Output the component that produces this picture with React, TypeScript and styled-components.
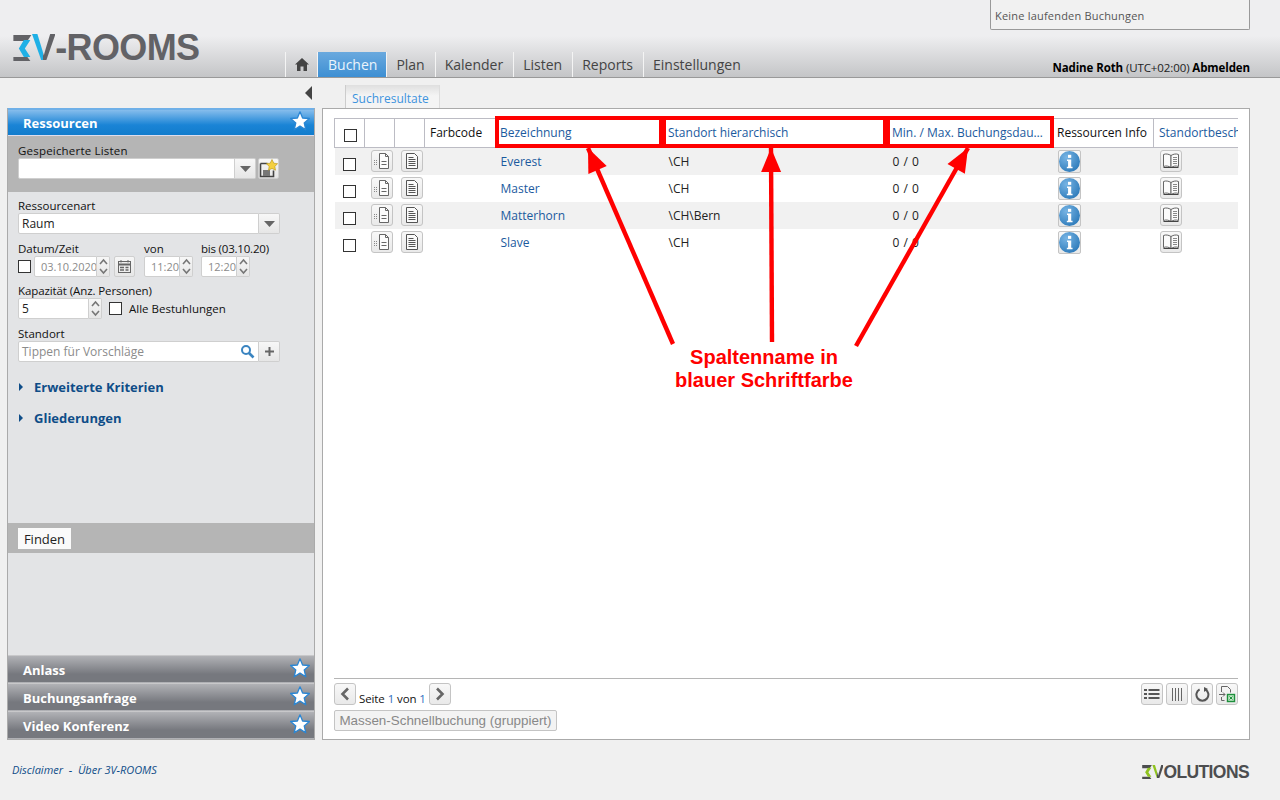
import React from 'react';

import styled, { createGlobalStyle } from 'styled-components';

const GlobalStyle = createGlobalStyle`
  html, body {
    margin: 0;
    padding: 0;
    background: #f0f0f0;
    font-family: "Open Sans", "Noto Sans", sans-serif;
    font-size: 12px;
    color: #111;
  }
`;

const Page = styled.div`
  position: relative;
  width: 1280px;
  height: 800px;
  overflow: hidden;
  display: flex;
  flex-direction: column;
`;

const Header = styled.header`
  height: 77px;
  flex: none;
  display: flex;
  align-items: flex-end;
  padding: 0 30px 0 13px;
  background: linear-gradient(#eeeef0 0, #eeeef0 36px, #c4c5c7 77px);
  border-bottom: 1px solid #999;
`;

const Logo = styled.div`
  width: 272px;
  align-self: flex-start;
  margin-top: 28px;
  display: flex;
  align-items: center;
  font-family: "Liberation Sans", sans-serif;
  font-weight: bold;
  font-size: 36px;
  line-height: 40px;
  letter-spacing: -0.6px;
  color: #626266;
`;

const LogoV = styled.span<{ $accent: string; $base: string }>`
  background: linear-gradient(90deg, ${(p) => p.$accent} 50%, ${(p) => p.$base} 50%);
  -webkit-background-clip: text;
  background-clip: text;
  color: transparent;
`;

const Nav = styled.nav`
  display: flex;
  height: 25px;
  flex: 1;
`;

const NavTab = styled.a<{ $active?: boolean }>`
  display: flex;
  align-items: center;
  padding: 0 ${(p) => (p.$active ? '9px' : '10px')} 0 ${(p) => (p.$active ? '10px' : '9px')};
  font-size: 14px;
  height: 25px;
  color: ${(p) => (p.$active ? '#eaf4fc' : '#444')};
  background: ${(p) => (p.$active ? 'linear-gradient(#6aa9de, #3d8fd3)' : 'transparent')};
  border-left: 1px solid #f4f4f4;
  box-sizing: border-box;
`;

const HomeTab = styled(NavTab)`
  width: 32px;
  justify-content: center;
  padding: 0;
`;

const UserColumn = styled.div`
  width: 260px;
  height: 77px;
  display: flex;
  flex-direction: column;
  justify-content: space-between;
  align-items: stretch;
`;

const BookingBox = styled.div`
  height: 30px;
  box-sizing: border-box;
  padding: 8px 0 0 4px;
  font-size: 11px;
  letter-spacing: 0.2px;
  line-height: 15px;
  color: #555;
  background: #f1f1f1;
  border: 1px solid #999;
  border-top: none;
  border-radius: 0 0 2px 2px;
`;

const UserLine = styled.div`
  text-align: right;
  font-size: 11.5px;
  line-height: 15px;
  padding-bottom: 2px;
  white-space: nowrap;
  color: #222;
  letter-spacing: -0.1px;

  b {
    color: #000;
  }
`;

const Main = styled.main`
  display: grid;
  grid-template-columns: 308px 928px;
  grid-template-rows: 30px 632px;
  column-gap: 7px;
  padding-left: 7px;
`;

const CollapseCell = styled.div`
  display: flex;
  justify-content: flex-end;
  align-items: center;
  padding: 0 3px 0 0;
`;

const TabCell = styled.div`
  display: flex;
  align-items: flex-end;
  padding-left: 23px;
`;

const ContentTab = styled.div`
  height: 24px;
  width: 95px;
  box-sizing: border-box;
  margin-bottom: -1px;
  padding-left: 6px;
  line-height: 27px;
  font-size: 12px;
  color: #3d93dd;
  background: linear-gradient(#dfdfdf, #f4f4f4 45%);
  border-left: 1px solid #ccc;
  border-right: 1px solid #ddd;
`;

const Sidebar = styled.aside`
  display: flex;
  flex-direction: column;
  box-sizing: border-box;
  height: 632px;
  background: #e3e4e6;
  border: 1px solid #aaa;
  border-top-color: #6fb0e8;
`;

const PanelHead = styled.div<{ $blue?: boolean }>`
  height: ${(p) => (p.$blue ? 27 : 28)}px;
  flex: none;
  box-sizing: border-box;
  display: flex;
  align-items: center;
  justify-content: space-between;
  padding: ${(p) => (p.$blue ? 0 : '1px')} 4px 0 15px;
  color: #fff;
  font-size: 13px;
  font-weight: bold;
  background: ${(p) =>
    p.$blue
      ? 'linear-gradient(#86bdec, #1a84d6 60%, #117ccc)'
      : 'linear-gradient(#b1b2b6, #76787e 70%)'};
  border-top: 1px solid ${(p) => (p.$blue ? '#6fb0e8' : '#c8c8ca')};
  border-bottom: 1px solid ${(p) => (p.$blue ? '#dde' : 'transparent')};

  svg {
    margin-bottom: 4px;
  }
`;

const SavedLists = styled.div`
  flex: none;
  height: 56px;
  box-sizing: border-box;
  padding: 7px 10px 0;
  background: #b5b5b5;
`;

const FormArea = styled.div`
  height: 331px;
  flex: none;
  box-sizing: border-box;
  padding: 6px 10px 0;
`;

const Label = styled.div<{ $gap?: number; $track?: number }>`
  height: 15px;
  line-height: 15px;
  font-size: 11.5px;
  color: #111;
  letter-spacing: ${(p) => p.$track ?? 0}px;
  margin-top: ${(p) => p.$gap ?? 0}px;
  white-space: nowrap;
`;

const Row = styled.div`
  display: flex;
  align-items: center;
`;

const Input = styled.div<{ $width?: number; $muted?: boolean }>`
  height: 21px;
  width: ${(p) => (p.$width ? `${p.$width}px` : 'auto')};
  flex: ${(p) => (p.$width ? 'none' : 1)};
  box-sizing: border-box;
  padding: 0 3px;
  line-height: 20px;
  font-size: 12px;
  color: ${(p) => (p.$muted ? '#8b8b8b' : '#222')};
  background: #fff;
  border: 1px solid #cfcfcf;
  border-radius: 2px 0 0 2px;
  white-space: nowrap;
  overflow: hidden;
  position: relative;
`;

const TimeInput = styled(Input)`
  padding: 0 0 0 6px;
  font-size: 11px;
`;

const ComboButton = styled.div`
  width: 21px;
  height: 21px;
  flex: none;
  box-sizing: border-box;
  display: flex;
  align-items: center;
  justify-content: center;
  background: linear-gradient(#f7f7f7, #e6e6e6);
  border: 1px solid #cfcfcf;
  border-left: none;
  border-radius: 0 2px 2px 0;
`;

const Spinner = styled.div`
  width: 13px;
  height: 21px;
  flex: none;
  box-sizing: border-box;
  display: flex;
  align-items: center;
  justify-content: center;
  background: linear-gradient(#f7f7f7, #e6e6e6);
  border: 1px solid #cfcfcf;
  border-left: none;
  border-radius: 0 2px 2px 0;
`;

const SaveButton = styled(ComboButton)`
  margin-left: 2px;
  border-left: 1px solid #cfcfcf;
  border-radius: 2px;
`;

const DateTimeLabels = styled.div`
  display: grid;
  grid-template-columns: 126px 57px auto;
  margin-top: 7px;
`;

const DateTimeRow = styled.div`
  display: flex;
  align-items: center;
`;

const Check = styled.span<{ $left?: number; $right?: number }>`
  display: inline-block;
  width: 13px;
  height: 13px;
  flex: none;
  box-sizing: border-box;
  background: #fff;
  border: 1px solid #333;
  margin-left: ${(p) => p.$left ?? 0}px;
  margin-right: ${(p) => p.$right ?? 0}px;
`;

const HeadCheck = styled(Check)`
  display: block;
  margin: 7px auto 0;
`;

const RowCheck = styled(Check)`
  display: block;
  margin: 6px auto 0;
`;

const CalendarButton = styled(SaveButton)`
  margin: 0 9px 0 4px;
`;

const TimeGroup = styled.div<{ $gap?: number }>`
  display: flex;
  margin-right: ${(p) => p.$gap ?? 0}px;
`;

const CheckText = styled.span`
  font-size: 11.5px;
  white-space: nowrap;
`;

const SearchIconSlot = styled.span`
  position: absolute;
  right: 3px;
  top: 2px;
  line-height: 0;
`;

const Expander = styled.div<{ $gap: number }>`
  display: flex;
  align-items: center;
  margin-top: ${(p) => p.$gap}px;
  height: 18px;
  font-size: 13px;
  font-weight: bold;
  color: #0f4d88;

  svg {
    margin-right: 11px;
    margin-left: 1px;
  }
`;

const FindBar = styled.div`
  flex: none;
  height: 30px;
  box-sizing: border-box;
  padding: 5px 0 0 10px;
  background: #b5b5b5;
`;

const FindButton = styled.div`
  width: 53px;
  height: 21px;
  text-align: center;
  line-height: 22px;
  font-size: 13px;
  color: #222;
  background: #fafafa;
`;

const Filler = styled.div`
  flex: 1;
`;

const Content = styled.section`
  position: relative;
  box-sizing: border-box;
  height: 632px;
  padding: 6px 11px 0;
  background: #fff;
  border: 1px solid #aaa;
  display: flex;
  flex-direction: column;
`;

const TableClip = styled.div`
  width: 904px;
  padding-top: 3px;
  overflow: hidden;
  flex: 1;
`;

const Table = styled.table`
  table-layout: fixed;
  width: 1024px;
  border-collapse: collapse;
  font-size: 12px;
`;

const Th = styled.th<{ $w: number; $link?: boolean; $marked?: boolean; $pad?: number }>`
  position: relative;
  width: ${(p) => p.$w}px;
  height: 29px;
  box-sizing: border-box;
  padding: 0 4px 2px ${(p) => p.$pad ?? 5}px;
  text-align: left;
  font-weight: normal;
  color: ${(p) => (p.$link ? '#1b5a9e' : '#111')};
  border: 1px solid #bcbcc4;
  white-space: nowrap;
  overflow: ${(p) => (p.$marked ? 'visible' : 'hidden')};
`;

const EllipsisText = styled.span`
  display: block;
  overflow: hidden;
  text-overflow: ellipsis;
`;

const Mark = styled.span`
  position: absolute;
  inset: -3px -1px -1px -1px;
  border: 4px solid #f00;
  pointer-events: none;
`;

const Tr = styled.tr<{ $odd: boolean }>`
  height: 27px;
  background: ${(p) => (p.$odd ? '#f1f1f1' : '#fff')};
`;

const Td = styled.td<{ $pad?: number }>`
  padding: 0 0 0 ${(p) => p.$pad ?? 6}px;
  white-space: nowrap;
  color: #222;
`;

const DurationCell = styled(Td)`
  word-spacing: 1px;
`;

const NameLink = styled.span`
  color: #1b5a9e;
`;

const IconButton = styled.span`
  display: inline-flex;
  width: 22px;
  height: 22px;
  box-sizing: border-box;
  align-items: center;
  justify-content: center;
  vertical-align: middle;
  background: linear-gradient(#f8f8f8, #e9e9e9);
  border: 1px solid #c4c4c4;
  border-radius: 3px;
`;

const InfoButton = styled(IconButton)`
  width: 23px;
  height: 23px;
  border-radius: 2px;
`;

const FootBar = styled.div`
  flex: none;
  height: 61px;
  border-top: 1px solid #b5b5b5;
  padding-top: 4px;
  box-sizing: border-box;
`;

const PagerRow = styled.div`
  display: flex;
  align-items: flex-start;
  height: 27px;
`;

const PageInfo = styled.span`
  font-size: 11.5px;
  line-height: 15px;
  letter-spacing: -0.1px;
  margin: 8px 3px 0 3px;
  white-space: nowrap;

  em {
    font-style: normal;
    color: #2f6fc0;
  }
`;

const ToolGroup = styled.div`
  margin-left: auto;
  display: flex;
  gap: 3px;
`;

const MassButton = styled.div`
  display: inline-block;
  height: 21px;
  width: 223px;
  box-sizing: border-box;
  text-align: center;
  font-family: "Liberation Sans", sans-serif;
  font-size: 13.4px;
  line-height: 19px;
  color: #888;
  background: #f3f3f3;
  border: 1px solid #c4c4c4;
  border-radius: 2px;
  white-space: nowrap;
`;

const Footer = styled.footer`
  flex: 1;
  display: flex;
  justify-content: space-between;
  align-items: flex-start;
  padding: 22px 31px 0 12px;
`;

const FooterLinks = styled.div`
  font-size: 11px;
  font-style: italic;
  line-height: 16px;
  color: #0f4d88;
`;

const BrandMark = styled.div`
  display: flex;
  align-items: center;
  margin-top: 1px;
  font-family: "Liberation Sans", sans-serif;
  font-weight: bold;
  font-size: 17.5px;
  line-height: 18px;
  letter-spacing: -0.6px;
  color: #4c4d4f;
`;

const Overlay = styled.svg`
  position: absolute;
  left: 0;
  top: 0;
  pointer-events: none;
`;

const Annotation = styled.div`
  position: absolute;
  left: 644px;
  top: 346px;
  width: 240px;
  text-align: center;
  font-family: "Liberation Sans", sans-serif;
  font-weight: bold;
  font-size: 20px;
  line-height: 23px;
  color: #f00;
`;

const Star = () => (
  <svg width="20" height="20" viewBox="0 0 20 20">
    <polygon
      points="10,0.8 12.6,7 19.4,7.5 14.2,11.9 15.8,18.8 10,15.1 4.2,18.8 5.8,11.9 0.6,7.5 7.4,7"
      fill="#fff"
      stroke="#2a86d4"
      strokeWidth="1.3"
      strokeLinejoin="round" />
  </svg>
);

const CaretDown = () => (
  <svg width="11" height="6" viewBox="0 0 11 6"><polygon points="0,0 11,0 5.5,6" fill="#666" /></svg>
);

const SpinArrows = () => (
  <svg width="9" height="17" viewBox="0 0 9 17" fill="none" stroke="#777" strokeWidth="1.6">
    <polyline points="1,6 4.5,2 8,6" />
    <polyline points="1,11 4.5,15 8,11" />
  </svg>
);

const DocDots = () => (
  <svg width="18" height="18" viewBox="0 0 18 18" fill="none" stroke="#666">
    <path d="M6.5 1.5h6l3 3v12h-9z" fill="#fcfcfc" />
    <path d="M12.5 1.5v3h3M8.5 9.5h5M8.5 12.5h5" />
    <g fill="#888" stroke="none">
      <rect x="1" y="8" width="1" height="1" /><rect x="3" y="8" width="1" height="1" />
      <rect x="1" y="10" width="1" height="1" /><rect x="3" y="10" width="1" height="1" />
      <rect x="1" y="12" width="1" height="1" /><rect x="3" y="12" width="1" height="1" />
    </g>
  </svg>
);

const DocLines = () => (
  <svg width="16" height="18" viewBox="0 0 16 18" fill="none" stroke="#555">
    <path d="M2.5 1.5h8l3 3v12h-11z" fill="#fafafa" />
    <path d="M4.5 5.5h5M4.5 7.5h7M4.5 9.5h7M4.5 11.5h7M4.5 13.5h7" />
  </svg>
);

const InfoIcon = () => (
  <svg width="21" height="21" viewBox="0 0 22 22">
    <defs>
      <radialGradient id="infoFill" cx="0.35" cy="0.3" r="0.8">
        <stop offset="0" stopColor="#77b4e4" />
        <stop offset="1" stopColor="#2a78b8" />
      </radialGradient>
    </defs>
    <circle cx="11" cy="11" r="11" fill="url(#infoFill)" />
    <rect x="9.4" y="4" width="3.4" height="3.2" fill="#fff" />
    <path d="M8.4 9h4.4v7.4h1.4v1.6H8.2v-1.6h1.3V10.6H8.4z" fill="#fff" />
  </svg>
);

const BookIcon = () => (
  <svg width="18" height="16" viewBox="0 0 18 16" fill="#fbfbfb" stroke="#666">
    <path d="M1.5 1.5c2.5-1 5-.5 7.5 1v12c-2.5-1.5-5-2-7.5-1z" />
    <path d="M16.5 1.5c-2.5-1-5-.5-7.5 1v12c2.5-1.5 5-2 7.5-1z" />
    <path d="M11 4.5h4M11 6.5h4M11 8.5h4M11 10.5h4" stroke="#888" />
    <path d="M1.5 14.5h15" stroke="#444" />
  </svg>
);

const HomeIcon = () => (
  <svg width="14" height="13" viewBox="0 0 14 13" fill="#444">
    <polygon points="7,0 14,6.5 12,6.5 12,13 8.5,13 8.5,8.5 5.5,8.5 5.5,13 2,13 2,6.5 0,6.5" />
  </svg>
);

const SaveStar = () => (
  <svg width="19" height="19" viewBox="0 0 19 19" fill="none">
    <path d="M1.5 4.5h7M1.5 4.5v13h13v-6" stroke="#444" strokeWidth="1.6" />
    <rect x="4" y="11" width="7" height="6" fill="#777" />
    <polygon
      points="13,0.5 14.8,4.2 18.6,4.7 15.8,7.4 16.5,11.2 13,9.4 9.5,11.2 10.2,7.4 7.4,4.7 11.2,4.2"
      fill="#f4d03f"
      stroke="#b8930f"
      strokeWidth="0.6" />
  </svg>
);

const CalendarIcon = () => (
  <svg width="15" height="15" viewBox="0 0 15 15" fill="none" stroke="#666">
    <rect x="1.5" y="2.5" width="12" height="11" fill="#eee" />
    <path d="M1.5 5.5h12" strokeWidth="2" />
    <path d="M3 8.5h4M8.5 8.5h3M3 11h4M8.5 11h3" strokeWidth="1.4" />
    <path d="M4 1v2.5M11 1v2.5" />
  </svg>
);

const SearchIcon = () => (
  <svg width="15" height="15" viewBox="0 0 15 15" fill="none" stroke="#3a84c0">
    <circle cx="6" cy="6" r="4" strokeWidth="2" />
    <path d="M9 9l4.5 4.5" strokeWidth="2.6" />
  </svg>
);

const PlusIcon = () => (
  <svg width="9" height="9" viewBox="0 0 9 9" stroke="#666" strokeWidth="2">
    <path d="M4.5 0v9M0 4.5h9" />
  </svg>
);

const TriangleRight = () => (
  <svg width="4" height="8" viewBox="0 0 4 8"><polygon points="0,0 4,4 0,8" fill="#0f4d88" /></svg>
);

const Chevron = ({ left }: { left?: boolean }) => (
  <svg width="10" height="14" viewBox="0 0 10 14" fill="none" stroke="#666" strokeWidth="2.6">
    <polyline points={ left ? '8,1.5 2.5,7 8,12.5' : '2,1.5 7.5,7 2,12.5' } />
  </svg>
);

const ListIcon = () => (
  <svg width="16" height="12" viewBox="0 0 16 12" fill="#555">
    <rect x="0" y="1" width="3" height="2" /><rect x="4.5" y="1" width="11" height="2" />
    <rect x="0" y="5" width="3" height="2" /><rect x="4.5" y="5" width="11" height="2" />
    <rect x="0" y="9" width="3" height="2" /><rect x="4.5" y="9" width="11" height="2" />
  </svg>
);

const ColumnsIcon = () => (
  <svg width="11" height="13" viewBox="0 0 11 13" stroke="#666">
    <path d="M.5 0v13M3.5 0v13M6.5 0v13M9.5 0v13" />
  </svg>
);

const RefreshIcon = () => (
  <svg width="15" height="15" viewBox="0 0 15 15" fill="none">
    <path d="M10.2 2.4a6 6 0 1 1-5.6 0" stroke="#555" strokeWidth="2" />
    <polygon points="9,0 13,2 9,5" fill="#555" />
  </svg>
);

const ExportIcon = () => (
  <svg width="18" height="18" viewBox="0 0 18 18" fill="none" stroke="#666">
    <path d="M3.5 7V1.5h6l3 3v3M3.5 12v3.5h3" />
    <path d="M1 9.5h6M5 7.5l2 2-2 2" />
    <rect x="9.5" y="9.5" width="7" height="7" fill="#bfe6c4" stroke="#1d8f3c" strokeWidth="1.4" />
    <path d="M11.5 11.5l3 3M14.5 11.5l-3 3" stroke="#1d8f3c" />
  </svg>
);

// stylised "3" of the brand logos: two dark bars around an accent chevron
const ThreeMark = ({ size, color, accent }: { size: number; color: string; accent: string }) => (
  <svg width={ size * 0.72 } height={ size } viewBox="0 0 18 26">
    <polygon points="0,0 18,0 14,6 0,6" fill={ color } />
    <polygon points="0,22 14,22 17,26 0,26" fill={ color } />
    <polygon points="10.5,5 17,5 11.5,13.5 17,22 10.5,22 5.5,13.5" fill={ accent } />
  </svg>
);

const arrowPolygon = (x1: number, y1: number, x2: number, y2: number) => {
  const len = Math.hypot(x2 - x1, y2 - y1);
  const ux = (x2 - x1) / len;
  const uy = (y2 - y1) / len;
  const bx = x2 - ux * 24;
  const by = y2 - uy * 24;
  const nx = -uy;
  const ny = ux;
  return `${x2},${y2} ${bx + nx * 10},${by + ny * 10} ${bx - nx * 10},${by - ny * 10}`;
};

const arrows = [
  [673, 344, 588, 148],
  [772, 342, 771, 148],
  [856, 346, 968, 148],
];

const columns = [
  { title: '', w: 30 },
  { title: '', w: 30 },
  { title: '', w: 30 },
  { title: 'Farbcode', w: 71 },
  { title: 'Bezeichnung', w: 167, link: true, marked: true, pad: 4 },
  { title: 'Standort hierarchisch', w: 224, link: true, marked: true },
  { title: 'Min. / Max. Buchungsdauer (Stunden)', w: 167, link: true, marked: true },
  { title: 'Ressourcen Info', w: 100, pad: 3 },
  { title: 'Standortbeschreibung', w: 205, link: true },
];

const rows = [
  { name: 'Everest', place: '\\CH' },
  { name: 'Master', place: '\\CH' },
  { name: 'Matterhorn', place: '\\CH\\Bern' },
  { name: 'Slave', place: '\\CH' },
];

const App = () => (
  <Page>
    <GlobalStyle />
    <Header>
      <Logo>
        <ThreeMark size={ 26 } color="#626266" accent="#1fb0e6" />
        <LogoV $accent="#1fb0e6" $base="#626266">V</LogoV>
        -ROOMS
      </Logo>
      <Nav>
        <HomeTab><HomeIcon /></HomeTab>
        <NavTab $active>Buchen</NavTab>
        <NavTab>Plan</NavTab>
        <NavTab>Kalender</NavTab>
        <NavTab>Listen</NavTab>
        <NavTab>Reports</NavTab>
        <NavTab>Einstellungen</NavTab>
      </Nav>
      <UserColumn>
        <BookingBox>Keine laufenden Buchungen</BookingBox>
        <UserLine><b>Nadine Roth</b> (UTC+02:00) <b>Abmelden</b></UserLine>
      </UserColumn>
    </Header>
    <Main>
      <CollapseCell>
        <svg width="7" height="14" viewBox="0 0 7 14"><polygon points="7,0 0,7 7,14" fill="#444" /></svg>
      </CollapseCell>
      <TabCell><ContentTab>Suchresultate</ContentTab></TabCell>
      <Sidebar>
        <PanelHead $blue>Ressourcen<Star /></PanelHead>
        <SavedLists>
          <Label $track={ 0.2 }>Gespeicherte Listen</Label>
          <Row>
            <Input $width={ 217 } />
            <ComboButton><CaretDown /></ComboButton>
            <SaveButton><SaveStar /></SaveButton>
          </Row>
        </SavedLists>
        <FormArea>
          <Label>Ressourcenart</Label>
          <Row>
            <Input $width={ 241 }>Raum</Input>
            <ComboButton><CaretDown /></ComboButton>
          </Row>
          <DateTimeLabels>
            <Label>Datum/Zeit</Label>
            <Label>von</Label>
            <Label $track={ -0.2 }>bis (03.10.20)</Label>
          </DateTimeLabels>
          <DateTimeRow>
            <Check $right={ 3 } />
            <TimeInput $width={ 63 } $muted>03.10.2020</TimeInput>
            <Spinner><SpinArrows /></Spinner>
            <CalendarButton><CalendarIcon /></CalendarButton>
            <TimeGroup $gap={ 8 }>
              <TimeInput $width={ 36 } $muted>11:20</TimeInput>
              <Spinner><SpinArrows /></Spinner>
            </TimeGroup>
            <TimeGroup>
              <TimeInput $width={ 36 } $muted>12:20</TimeInput>
              <Spinner><SpinArrows /></Spinner>
            </TimeGroup>
          </DateTimeRow>
          <Label $gap={ 6 } $track={ -0.1 }>Kapazität (Anz. Personen)</Label>
          <Row>
            <Input $width={ 71 }>5</Input>
            <Spinner><SpinArrows /></Spinner>
            <Check $left={ 7 } $right={ 7 } />
            <CheckText>Alle Bestuhlungen</CheckText>
          </Row>
          <Label $gap={ 7 }>Standort</Label>
          <Row>
            <Input $width={ 241 } $muted>
              Tippen für Vorschläge
              <SearchIconSlot><SearchIcon /></SearchIconSlot>
            </Input>
            <ComboButton><PlusIcon /></ComboButton>
          </Row>
          <Expander $gap={ 16 }><TriangleRight />Erweiterte Kriterien</Expander>
          <Expander $gap={ 13 }><TriangleRight />Gliederungen</Expander>
        </FormArea>
        <FindBar><FindButton>Finden</FindButton></FindBar>
        <Filler />
        <PanelHead>Anlass<Star /></PanelHead>
        <PanelHead>Buchungsanfrage<Star /></PanelHead>
        <PanelHead>Video Konferenz<Star /></PanelHead>
      </Sidebar>
      <Content>
        <TableClip>
          <Table>
            <thead>
              <tr>
                {columns.map((column, index) => (
                  <Th
                    key={ index }
                    $w={ column.w }
                    $link={ column.link }
                    $marked={ column.marked }
                    $pad={ column.pad }>
                    {index === 0 ? <HeadCheck /> : <EllipsisText>{column.title}</EllipsisText>}
                    {column.marked && <Mark />}
                  </Th>
                ))}
              </tr>
            </thead>
            <tbody>
              {rows.map((row, index) => (
                <Tr key={ row.name } $odd={ index % 2 === 0 }>
                  <Td $pad={ 0 }><RowCheck /></Td>
                  <Td $pad={ 6 }><IconButton><DocDots /></IconButton></Td>
                  <Td $pad={ 6 }><IconButton><DocLines /></IconButton></Td>
                  <Td />
                  <Td $pad={ 5 }><NameLink>{row.name}</NameLink></Td>
                  <Td>{row.place}</Td>
                  <DurationCell>0 / 0</DurationCell>
                  <Td $pad={ 4 }><InfoButton><InfoIcon /></InfoButton></Td>
                  <Td><IconButton><BookIcon /></IconButton></Td>
                </Tr>
              ))}
            </tbody>
          </Table>
        </TableClip>
        <FootBar>
          <PagerRow>
            <IconButton><Chevron left /></IconButton>
            <PageInfo>Seite <em>1</em> von <em>1</em></PageInfo>
            <IconButton><Chevron /></IconButton>
            <ToolGroup>
              <IconButton><ListIcon /></IconButton>
              <IconButton><ColumnsIcon /></IconButton>
              <IconButton><RefreshIcon /></IconButton>
              <IconButton><ExportIcon /></IconButton>
            </ToolGroup>
          </PagerRow>
          <MassButton>Massen-Schnellbuchung (gruppiert)</MassButton>
        </FootBar>
      </Content>
    </Main>
    <Footer>
      <FooterLinks>Disclaimer&nbsp; -&nbsp; Über 3V-ROOMS</FooterLinks>
      <BrandMark>
        <ThreeMark size={ 14 } color="#4c4d4f" accent="#8fc31f" />
        <LogoV $accent="#8fc31f" $base="#4c4d4f">V</LogoV>
        OLUTIONS
      </BrandMark>
    </Footer>
    <Overlay width="1280" height="800">
      {arrows.map(([x1, y1, x2, y2]) => (
        <g key={ x2 }>
          <line x1={ x1 } y1={ y1 } x2={ x2 } y2={ y2 } stroke="#f00" strokeWidth="4.4" />
          <polygon points={ arrowPolygon(x1, y1, x2, y2) } fill="#f00" />
        </g>
      ))}
    </Overlay>
    <Annotation>Spaltenname in<br />blauer Schriftfarbe</Annotation>
  </Page>
);

export default App;
